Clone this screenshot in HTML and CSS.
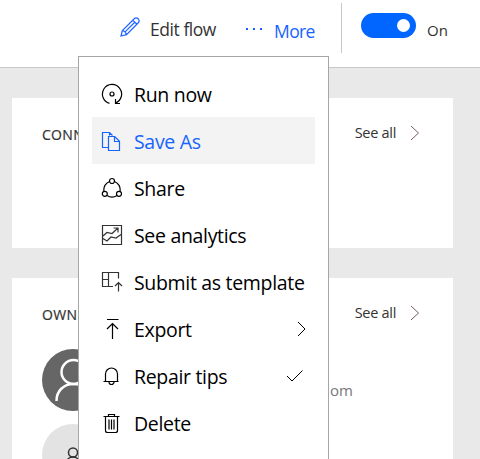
FILE: index.html
```html
<!DOCTYPE html>
<html lang="en">
<head>
<meta charset="utf-8">
<title>Flow details</title>
<link rel="stylesheet" href="styles.css">
</head>
<body>
<header class="toolbar">
  <button class="command edit">
    <svg class="pencil" width="20" height="20" viewBox="0 0 20 20"><path d="M1 19l1.400-5.500L14.200 1.700Q16.200 0 18.200 1.800Q20 3.800 18.300 5.800L6.500 17.600zM2.400 13.500q3 .5 4.100 4.100M12.800 3.100l4.100 4.100M4.600 15.400L14.800 5.200"/></svg>
    <span>Edit flow</span>
  </button>
  <button class="command more">
    <svg width="18" height="4" viewBox="0 0 18 4"><path class="dots" d="M1 1h2v2H1zM8 1h2v2H8zM15 1h2v2h-2z"/></svg>
    <span>More</span>
  </button>
  <span class="divider"></span>
  <span class="toggle"><span class="knob"></span></span>
  <span class="state">On</span>
</header>
<main class="content">
  <section class="card">
    <div class="card-head">
      <h2>CONNECTIONS</h2>
      <a class="see-all"><span>See all</span><svg width="10" height="16" viewBox="0 0 10 16"><path d="M1 1l7.500 7L1 15"/></svg></a>
    </div>
  </section>
  <section class="card owners">
    <div class="card-head">
      <h2>OWNERS</h2>
      <a class="see-all"><span>See all</span><svg width="10" height="16" viewBox="0 0 10 16"><path d="M1 1l7.500 7L1 15"/></svg></a>
    </div>
    <div class="owner">
      <svg class="avatar" width="62" height="62" viewBox="0 0 62 62"><circle class="disc" cx="31" cy="31" r="31"/><circle class="person" cx="31.500" cy="23" r="12"/><path class="person" d="M14.500 52c0-10 7-17 17-17s17 7 17 17"/></svg>
      <span class="mail">om</span>
    </div>
    <svg class="avatar light" width="62" height="62" viewBox="0 0 62 62"><circle class="disc" cx="31" cy="31" r="31"/><circle class="person" cx="31" cy="28.500" r="4.500"/><path class="person" d="M24 41c0-5 3-8 7-8s7 3 7 8"/></svg>
  </section>
</main>
<nav class="menu">
  <a class="item"><svg class="icon" viewBox="0 0 22 22"><path d="M8.500 20.300A9.600 9.600 0 1 1 14.500 20M14.500 16v4.500H19"/><circle cx="11" cy="11" r="2"/></svg><span>Run now</span></a>
  <a class="item selected"><svg class="icon" viewBox="0 0 22 22"><path d="M7.500 17.500h-6v-15h7l3 3M7.500 6.500h6.200l4.800 4.800v9.200h-11zM13.500 6.500v5h5M8.500 2.500v3"/></svg><span>Save As</span></a>
  <a class="item"><svg class="icon" viewBox="0 0 22 22"><circle cx="11" cy="4" r="2.500"/><circle cx="3.800" cy="16.800" r="2.500"/><circle cx="18" cy="16.800" r="2.500"/><path d="M8.500 4.500A8.700 8.700 0 0 0 3 14.300M13.500 4.500A8.700 8.700 0 0 1 19 14.300M6 18.400a9 9 0 0 0 10 0"/></svg><span>Share</span></a>
  <a class="item"><svg class="icon grey" viewBox="0 0 22 22"><path d="M1.500 1.500h19v19h-19zM2 12l4-3.500 5 1L17 4M12.500 4H17v4.500M2 14.500l4 2.500 4-4 5 1 5-3.500"/></svg><span>See analytics</span></a>
  <a class="item"><svg class="icon grey" viewBox="0 0 22 22"><path d="M12 15.500H1.500v-14h16v6M7.500 1.500v14M1.500 8.500h6M17.500 20.500v-9M14 15l3.500-3.500L21 15"/></svg><span>Submit as template</span></a>
  <a class="item"><svg class="icon" viewBox="0 0 22 22"><path d="M6 1.500h11.500M11.500 21V6M6 11l5.500-5.500L17 11"/></svg><span>Export</span><svg class="mark chevron" width="16" height="16" viewBox="0 0 16 16"><path d="M5 1l7 7-7 7"/></svg></a>
  <a class="item"><svg class="icon" viewBox="0 0 22 22"><path d="M2.500 16.500h15M4.500 16.500V9a6 6 0 0 1 12 0v7.500M8 17a2.500 2.500 0 0 0 5 0"/></svg><span>Repair tips</span><svg class="mark" width="16" height="16" viewBox="0 0 16 16"><path d="M0 8l5 5L15.500 2.500"/></svg></a>
  <a class="item"><svg class="icon" viewBox="0 0 22 22"><path d="M2.500 4.500h16M4.500 4.500v14q0 2 2 2h8q2 0 2-2v-14M7.500 4.500v-2h6v2M8 7.500v10M10.500 7.500v10M13 7.500v10"/></svg><span>Delete</span></a>
</nav>
</body>
</html>
```
FILE: styles.css
```css
* { box-sizing: border-box; }
body {
  margin: 0;
  position: relative;
  height: 459px;
  overflow: hidden;
  background: #e9e9e9;
  color: #333;
  font-family: "Open Sans", "Noto Sans", sans-serif;
}
svg { fill: none; stroke: currentColor; flex: none; }
.toolbar {
  display: flex;
  align-items: flex-start;
  height: 68px;
  background: #fff;
  border-bottom: 1px solid #c8c8c8;
}
.command {
  display: flex;
  align-items: center;
  padding: 0;
  border: 0;
  background: none;
  font: 17.5px/24px "Open Sans", sans-serif;
  color: #333;
  white-space: nowrap;
}
.edit { width: 125px; margin: 17px 0 0 120px; gap: 10px; letter-spacing: -0.45px; }
.pencil { color: #2266ff; margin-top: -4px; stroke-width: 1.25; }
.more { width: 96px; margin-top: 19px; gap: 11px; color: #1664ff; letter-spacing: -0.6px; }
.more svg { margin-top: -4px; }
.dots { fill: currentColor; stroke: none; }
.divider { width: 1px; height: 50px; margin-top: 3px; background: #c8c8c8; }
.toggle {
  display: flex;
  justify-content: flex-end;
  align-items: center;
  width: 55px;
  height: 25px;
  margin: 13px 0 0 19px;
  padding-right: 6px;
  border-radius: 13px;
  background: #0066ff;
}
.knob { width: 13px; height: 13px; border-radius: 50%; background: #fff; }
.state { margin: 20px 0 0 11px; font-size: 15px; line-height: 20px; }
.content { display: flex; flex-direction: column; gap: 30px; width: 453px; padding: 30px 0 0 12px; }
.card { height: 150px; padding: 26px 33px 0 30px; background: #fff; }
.owners { height: 181px; overflow: hidden; }
.card-head { display: flex; justify-content: space-between; height: 20px; }
h2 { margin: 0; padding-top: 1px; font-size: 14px; line-height: 20px; font-weight: 400; letter-spacing: 0.3px; -webkit-text-stroke: 0.2px; }
.see-all { display: flex; gap: 14px; height: 18px; align-items: center; font-size: 14.5px; letter-spacing: -0.3px; line-height: 18px; }
.see-all svg { color: #765c60; }
.owner { display: flex; gap: 226px; height: 62px; margin-top: 25px; }
.avatar { display: block; color: #fff; stroke-width: 2.5; }
.avatar .disc { fill: #666; stroke: none; }
.light { margin-top: 13px; color: #333; stroke-width: 1.5; }
.light .disc { fill: #e3e3e3; }
.mail { margin-top: 31px; font-size: 15px; line-height: 20px; color: #777; }
.menu {
  position: absolute;
  left: 78px;
  top: 56px;
  width: 251px;
  height: 403px;
  padding: 13px;
  border: 1px solid #a6a6a6;
  border-bottom: 0;
  background: #fff;
}
.item {
  display: flex;
  align-items: center;
  height: 47px;
  padding: 0 9px;
  font-size: 19.5px;
  line-height: 26px;
  letter-spacing: -0.32px;
  color: #000;
  white-space: nowrap;
}
.item span { padding-top: 2px; }
.selected { background: #f3f3f3; color: #1664ff; }
.icon { width: 22px; height: 22px; margin-right: 11px; stroke-width: 1.2; }
.grey { color: #333; }
.mark { margin-left: auto; margin-right: 3px; }
.chevron { margin-right: -3px; }
```
